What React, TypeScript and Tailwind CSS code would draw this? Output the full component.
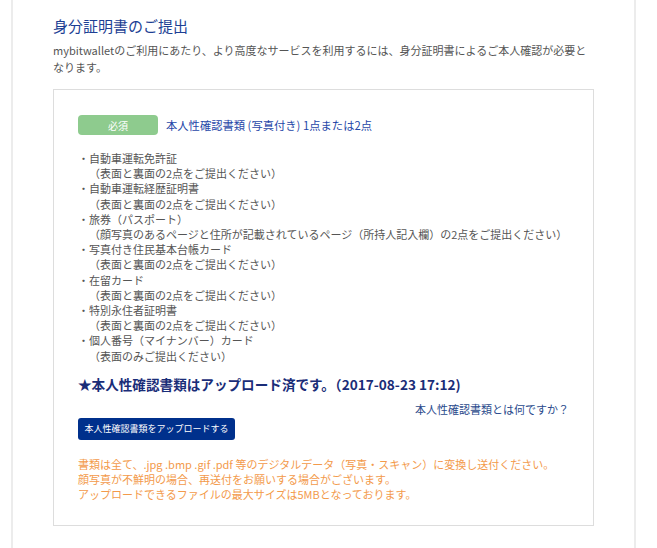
import React from 'react';

const docs = [
  { name: '自動車運転免許証', note: '（表面と裏面の2点をご提出ください）' },
  { name: '自動車運転経歴証明書', note: '（表面と裏面の2点をご提出ください）' },
  { name: '旅券（パスポート）', note: '（顔写真のあるページと住所が記載されているページ（所持人記入欄）の2点をご提出ください）' },
  { name: '写真付き住民基本台帳カード', note: '（表面と裏面の2点をご提出ください）' },
  { name: '在留カード', note: '（表面と裏面の2点をご提出ください）' },
  { name: '特別永住者証明書', note: '（表面と裏面の2点をご提出ください）' },
  { name: '個人番号（マイナンバー）カード', note: '（表面のみご提出ください）' },
];

const App: React.FC = () => {
  return (
    <div
      className="min-h-[548px] bg-white pl-[11px]"
      style={{ fontFamily: '"Noto Sans CJK JP", "Noto Sans", sans-serif' }}
    >
      <div className="w-[625px] min-h-[548px] border-x-2 border-[#ececec] pl-[40px] pr-[40px] pt-[16px]">
        <h2 className="text-[15px] leading-[20px] text-[#1d3f94]">身分証明書のご提出</h2>
        <p className="mt-[6px] text-[11px] leading-[17px] text-[#555]">
          mybitwalletのご利用にあたり、より高度なサービスを利用するには、身分証明書によるご本人確認が必要となります。
        </p>

        <div className="mt-[13px] border border-[#dddddd] px-[24px] pt-[25px] pb-[23px]">
          <div className="flex items-center gap-[8px]">
            <span className="flex h-[20px] w-[80px] items-center justify-center rounded-[4px] bg-[#8ecb8e] text-[10px] text-white">
              必須
            </span>
            <span className="text-[11.3px] text-[#1f47a8]">本人性確認書類 (写真付き) 1点または2点</span>
          </div>

          <ul className="mt-[16px] text-[11px] leading-[15.2px] text-[#555]">
            {docs.map((d) => (
              <li key={d.name}>
                <div>・{d.name}</div>
                <div className="pl-[11px]">{d.note}</div>
              </li>
            ))}
          </ul>

          <p className="mt-[10px] text-[13.6px] font-bold leading-[20px] text-[#1a2d78]">
            ★本人性確認書類はアップロード済です。（2017-08-23 17:12)
          </p>

          <p className="mt-[7px] text-right text-[11px] leading-[16px] text-[#2a4a8c]">本人性確認書類とは何ですか？</p>

          <button className="mt-[1px] flex h-[22px] w-[157px] items-center justify-center rounded-[3px] bg-[#00308c] text-[9px] text-white">
            本人性確認書類をアップロードする
          </button>

          <div className="mt-[17px] text-[11px] leading-[15px] text-[#f39a4b]">
            <p>書類は全て、.jpg .bmp .gif .pdf 等のデジタルデータ（写真・スキャン）に変換し送付ください。</p>
            <p>顔写真が不鮮明の場合、再送付をお願いする場合がございます。</p>
            <p>アップロードできるファイルの最大サイズは5MBとなっております。</p>
          </div>
        </div>
      </div>
    </div>
  );
};

export default App;
